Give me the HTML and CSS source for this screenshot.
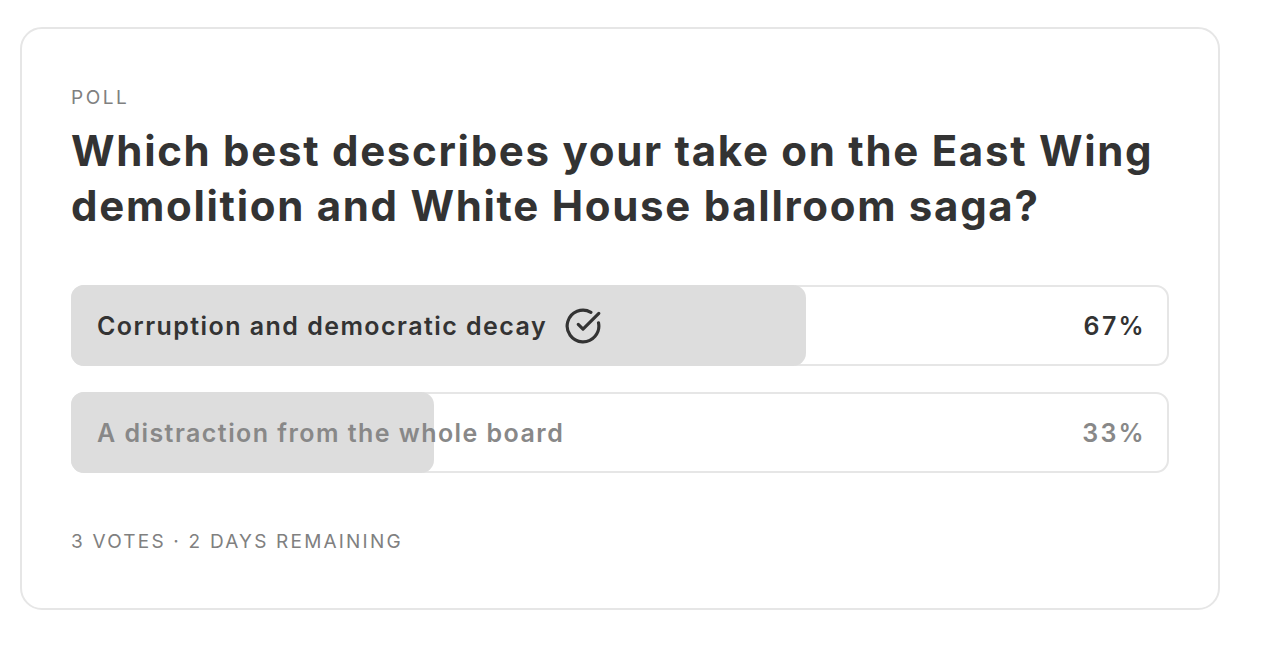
FILE: index.html
```html
<!DOCTYPE html>
<html lang="en">
<head>
<meta charset="utf-8">
<title>Poll</title>
<link rel="stylesheet" href="styles.css">
</head>
<body>
<div class="card">
  <div class="label">POLL</div>
  <h1 class="question">Which best describes your take on the East Wing demolition and White House ballroom saga?</h1>
  <div class="options">
    <div class="option selected">
      <div class="fill" style="width: calc(67% + 2px)"></div>
      <div class="option-text">
        <span>Corruption and democratic decay</span>
        <svg class="check" viewBox="0 0 24 24" fill="none" stroke="currentColor" stroke-width="2" stroke-linecap="round" stroke-linejoin="round"><path d="M21.801 10A10 10 0 1 1 17 3.335"/><path d="m9 11 3 3L22 4"/></svg>
      </div>
      <div class="pct">67%</div>
    </div>
    <div class="option">
      <div class="fill" style="width: calc(33% + 2px)"></div>
      <div class="option-text"><span>A distraction from the whole board</span></div>
      <div class="pct">33%</div>
    </div>
  </div>
  <div class="meta">3 VOTES · 2 DAYS REMAINING</div>
</div>
</body>
</html>
```
FILE: styles.css
```css
* { box-sizing: border-box; }
html, body { margin: 0; background: #fff; }
body {
  padding: 27px 44px 0 20px;
  font-family: Inter, "Noto Sans", "Liberation Sans", sans-serif;
  color: #333;
}
.card {
  width: 1200px;
  height: 583px;
  border: 2px solid #e6e6e6;
  border-radius: 22px;
  padding: 57px 49px 0 49px;
}
.label {
  font-size: 19px;
  letter-spacing: 2.5px;
  color: #808080;
  line-height: 24px;
}
.question {
  margin: 13px 0 0 0;
  font-size: 42px;
  line-height: 55px;
  font-weight: 700;
  color: #333;
  letter-spacing: 1.7px;
}
.options {
  margin-top: 52px;
  display: flex;
  flex-direction: column;
  gap: 26px;
}
.option {
  position: relative;
  height: 81px;
  border: 2px solid #e6e6e6;
  border-radius: 13px;
  display: flex;
  align-items: center;
  justify-content: space-between;
  padding: 0 21px 0 24px;
}
.fill {
  position: absolute;
  left: -2px;
  top: -2px;
  bottom: -2px;
  background: #dddddd;
  border-radius: 13px;
}
.option-text {
  position: relative;
  display: flex;
  align-items: center;
  gap: 17px;
  font-size: 25px;
  font-weight: 600;
  color: #333;
  letter-spacing: 1.45px;
}
.pct {
  position: relative;
  font-size: 25px;
  font-weight: 600;
  color: #333;
  letter-spacing: 2.3px;
}
.option:not(.selected) .option-text,
.option:not(.selected) .pct { color: #888; }
.check { width: 38px; height: 38px; color: #333; }
.meta {
  margin-top: 57px;
  font-size: 19px;
  letter-spacing: 2.2px;
  color: #808080;
}
```
